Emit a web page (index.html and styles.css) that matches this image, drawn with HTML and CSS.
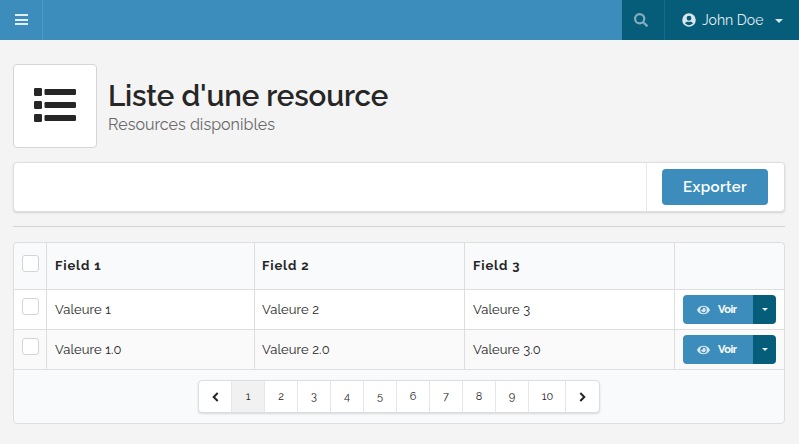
FILE: index.html
```html
<!DOCTYPE html>
<html lang="fr">
<head>
<meta charset="utf-8">
<title>Liste d'une resource</title>
<link rel="stylesheet" href="styles.css">
</head>
<body>
<svg width="0" height="0" class="defs">
  <symbol id="eye" viewBox="0 0 576 512"><path fill-rule="evenodd" d="M573 241C518 136 411 64 288 64S58 136 3 241a32 32 0 0 0 0 29c55 106 162 178 285 178s230-72 285-177a32 32 0 0 0 0-30zM288 400a144 144 0 1 1 144-144 144 144 0 0 1-144 144zm0-240a95 95 0 0 0-25 4 48 48 0 0 1-67 67 96 96 0 1 0 92-71z"/></symbol>
</svg>
<header class="topbar">
  <a class="burger"><svg width="13" height="12" viewBox="0 0 13 12"><path d="M0 0h13v2H0zM0 5h13v2H0zM0 9h13v2H0z"/></svg></a>
  <div class="account">
    <a class="search"><svg width="14" height="14" viewBox="0 0 512 512"><path fill-rule="evenodd" d="M505 443L405 343c-4-4-11-7-17-7h-16a208 208 0 1 0-36 36v16c0 6 3 13 7 17l100 100c9 9 24 9 34 0l28-28c9-10 9-25 0-34zM208 336a128 128 0 1 1 0-256 128 128 0 0 1 0 256z"/></svg></a>
    <a class="user">
      <svg width="14" height="14" viewBox="0 0 496 512"><path fill-rule="evenodd" d="M248 8a248 248 0 1 0 0 496 248 248 0 0 0 0-496zm0 96a88 88 0 1 1 0 176 88 88 0 0 1 0-176zm0 344c-59 0-111-27-146-69 19-35 56-59 98-59 7 0 23 8 48 8s41-8 48-8c42 0 79 24 98 59-35 42-87 69-146 69z"/></svg>
      <span class="name">John Doe</span>
      <i class="caret"></i>
    </a>
  </div>
</header>
<main>
  <div class="heading">
    <div class="heading-icon"><svg width="42" height="35" viewBox="0 0 42 35"><rect width="8" height="8" rx="1.300"/><rect y="13" width="8" height="8" rx="1.300"/><rect y="26" width="8" height="8" rx="1.300"/><rect x="10.500" y="1" width="31.500" height="6" rx="1.300"/><rect x="10.500" y="14" width="31.500" height="6" rx="1.300"/><rect x="10.500" y="27" width="31.500" height="6" rx="1.300"/></svg></div>
    <div>
      <h1>Liste d'une resource</h1>
      <p class="subtitle">Resources disponibles</p>
    </div>
  </div>
  <div class="toolbar"><div class="tool"><button class="export">Exporter</button></div></div>
  <hr>
  <section class="grid">
    <table>
      <colgroup><col class="c-check"><col class="c-first"><col class="c-field"><col class="c-field"><col></colgroup>
      <thead><tr><th><i class="check"></i></th><th>Field 1</th><th>Field 2</th><th>Field 3</th><th></th></tr></thead>
      <tbody>
        <tr><td><i class="check"></i></td><td>Valeure 1</td><td>Valeure 2</td><td>Valeure 3</td><td><div class="split"><button class="view"><svg width="13" height="12" viewBox="0 0 576 512"><use href="#eye"/></svg><span>Voir</span></button><button class="more"><i class="caret"></i></button></div></td></tr>
        <tr><td><i class="check"></i></td><td>Valeure 1.0</td><td>Valeure 2.0</td><td>Valeure 3.0</td><td><div class="split"><button class="view"><svg width="13" height="12" viewBox="0 0 576 512"><use href="#eye"/></svg><span>Voir</span></button><button class="more"><i class="caret"></i></button></div></td></tr>
      </tbody>
    </table>
    <footer>
      <nav class="pages">
        <a><svg width="7" height="10" viewBox="0 0 7 10"><path d="M5.700 1L1.700 5l4 4"/></svg></a><a class="active">1</a><a>2</a><a>3</a><a>4</a><a>5</a><a>6</a><a>7</a><a>8</a><a>9</a><a class="wide">10</a><a class="last"><svg width="7" height="10" viewBox="0 0 7 10"><path d="M1.300 1l4 4-4 4"/></svg></a>
      </nav>
    </footer>
  </section>
</main>
</body>
</html>
```
FILE: styles.css
```css
* { box-sizing: border-box; }
body { margin: 0; height: 444px; overflow: hidden; background: #f4f4f4; color: #262626; font-family: Raleway, Lato, sans-serif; font-size: 13px; }
button { margin: 0; border: 0; padding: 0; font: inherit; color: #fff; background: #3c8dbc; }
svg { display: block; fill: currentColor; flex: none; }
.defs { position: absolute; }
.topbar { display: flex; justify-content: space-between; height: 40px; background: #3c8dbc; color: rgba(255,255,255,.85); }
.burger { width: 43px; padding: 14px 0 0 15px; border-right: 1px solid #4c9ac6; }
.account { display: flex; width: 177px; background: #065d7a; }
.search { width: 43px; padding: 13px 0 0 12px; border-right: 1px solid #1a6a85; color: #83aebd; }
.user { display: flex; align-items: center; padding-left: 17px; }
.name { margin-left: 6px; width: 73px; font-size: 14px; font-weight: 400; color: #fff; white-space: nowrap; opacity: .9; }
.caret { display: block; width: 8px; height: 4px; background: currentColor; clip-path: polygon(0 0, 100% 0, 50% 100%); margin-top: 2px; }
main { padding: 24px 14px 0 13px; }
.heading { display: flex; height: 84px; }
.heading-icon { width: 84px; height: 84px; margin-right: 11px; padding: 23px 0 0 20px; border: 1px solid #d4d4d5; border-radius: 4px; background: #fff; }
h1 { margin: 14px 0 0; font-size: 29.500px; line-height: 36px; font-weight: 600; letter-spacing: -.15px; }
.subtitle { margin: 0; font-size: 16px; line-height: 21px; color: #686868; font-weight: 400; letter-spacing: .03px; }
.toolbar { display: flex; justify-content: flex-end; height: 50px; margin-top: 14px; border: 1px solid #dededf; border-radius: 4px; background: #fff; box-shadow: 0 1px 2px rgba(34,36,38,.15); }
.tool { width: 138px; padding: 6px 0 0 15px; border-left: 1px solid #e8e8e9; }
.export { width: 106px; height: 36px; border-radius: 4px; font-size: 15px; font-weight: 600; letter-spacing: .4px; }
hr { height: 1px; margin: 14px 0 15px; border: 0; background: #d4d4d5; }
.grid { height: 182px; border: 1px solid #dededf; border-radius: 4px; background: #f9fafb; overflow: hidden; }
table { width: 770px; table-layout: fixed; border-collapse: separate; border-spacing: 0; }
.c-check { width: 32px; }
.c-first { width: 208px; }
.c-field { width: 210px; }
th, td { height: 40px; padding: 0 0 0 8px; border-bottom: 1px solid #dededf; text-align: left; letter-spacing: .1px; }
th { height: 47px; padding-bottom: 2px; font-weight: 700; letter-spacing: .85px; }
th:nth-child(3), td:nth-child(3) { padding-left: 7px; }
th + th, td + td { border-left: 1px solid #dededf; }
tbody tr { background: #fff; }
tbody tr + tr { background: #fafafa; }
.check { display: block; width: 17px; height: 17px; margin-top: -4px; border: 1px solid #d4d4d5; border-radius: 3px; background: #fff; }
td .check { margin-top: -6px; }
.split { display: flex; width: 93px; height: 29px; border-radius: 4px; overflow: hidden; }
.view { display: flex; align-items: center; width: 70px; padding-left: 14px; font-size: 11px; font-weight: 700; }
.view svg { opacity: .8; }
.view span { margin-left: 8px; letter-spacing: -.45px; }
.more { width: 23px; padding-left: 9px; background: #065d7a; }
.more .caret { width: 6px; height: 3px; margin: 0; opacity: .9; }
footer { padding-top: 10px; }
.pages { display: flex; width: 402px; height: 33px; margin: 0 auto; border: 1px solid #dededf; border-radius: 4px; background: #fff; box-shadow: 0 1px 2px rgba(34,36,38,.15); overflow: hidden; }
.pages a { width: 33px; display: flex; align-items: center; justify-content: center; border-right: 1px solid #e6e6e6; font-size: 11px; }
.pages .active { background: #f1f1f1; }
.pages .wide { width: 37px; padding-left: 1px; }
.pages .last { border: 0; }
.pages svg { fill: none; stroke: currentColor; stroke-width: 2; }
```
